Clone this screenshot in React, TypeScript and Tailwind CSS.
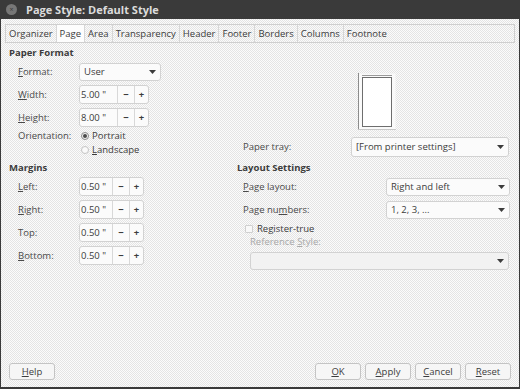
import React from "react";

const font = { fontFamily: '"Open Sans", "DejaVu Sans", sans-serif' };

function U({ children }: { children: string }) {
  return <span className="underline underline-offset-[1px]">{children}</span>;
}

function Arrow() {
  return (
    <svg width="7" height="4" viewBox="0 0 7 4" className="shrink-0">
      <path d="M0 0 L7 0 L3.5 4 Z" fill="#3c3c3c" />
    </svg>
  );
}

function Dropdown({
  value,
  className,
  disabled,
}: {
  value: string;
  className: string;
  disabled?: boolean;
}) {
  return (
    <div
      className={`flex items-center justify-between rounded-[3px] border border-[#d2d2d2] pl-[4px] pr-[4px] ${
        disabled ? "bg-[#f2f2f2]" : "bg-[#fbfbfb]"
      } ${className}`}
    >
      <span className="text-[#3c3c3c]">{value}</span>
      <Arrow />
    </div>
  );
}

function Spin({ value, valueW }: { value: string; valueW: string }) {
  return (
    <div className="flex h-full items-stretch rounded-[3px] border border-[#d2d2d2] bg-[#fbfbfb]">
      <span className={`flex items-center pl-[1px] text-[#3c3c3c] ${valueW}`}>{value}</span>
      <span className="flex w-[17px] items-center justify-center border-l border-[#d8d8d8] font-bold text-[#3c3c3c]">
        −
      </span>
      <span className="flex w-[14px] items-center justify-center border-l border-[#d8d8d8] font-bold text-[#3c3c3c]">
        +
      </span>
    </div>
  );
}

function Button({ children }: { children: React.ReactNode }) {
  return (
    <div className="flex h-[17px] w-[46px] items-center justify-center rounded-[3px] border border-[#c4c4c4] bg-[#f6f6f6] text-[#3c3c3c]">
      <span>{children}</span>
    </div>
  );
}

const tabs = ["Organizer", "Page", "Area", "Transparency", "Header", "Footer", "Borders", "Columns", "Footnote"];

export default function App() {
  return (
    <div
      className="flex h-[389px] w-[520px] flex-col overflow-hidden text-[9.5px] leading-none"
      style={font}
    >
      {/* title bar */}
      <div className="flex h-[19px] shrink-0 items-center bg-[#3a3a3a] pl-[6px]">
        <div className="flex h-[11px] w-[11px] items-center justify-center rounded-full bg-[#777777] text-[7px] text-[#3a3a3a]">
          ×
        </div>
        <span className="ml-[9px] text-[11px] font-bold text-[#dcdcdc]">Page Style: Default Style</span>
      </div>

      <div className="flex flex-1 flex-col border-x border-b-2 border-[#3a3a3a] bg-[repeating-conic-gradient(#fbfbfb_0_25%,#e4e4e4_0_50%)] bg-[length:2px_2px]">
        {/* tabs */}
        <div className="mx-[4px] mt-[5px] flex h-[19px] items-stretch border border-[#cfcfcf]">
          {tabs.map((t) => (
            <div
              key={t}
              className={`flex items-center border-r border-[#d6d6d6] px-[3px] text-[#3c3c3c] ${
                t === "Page" ? "bg-[#fdfdfd]" : ""
              } ${t === "Footnote" ? "border-r-0" : ""}`}
            >
              {t}
            </div>
          ))}
        </div>

        {/* top section */}
        <div className="mt-[3px] flex">
          <div className="w-[228px] pl-[8px]">
            <div className="flex h-[14px] items-center font-bold text-[#3c3c3c]">Paper Format</div>
            <div className="mt-[3px] flex h-[18px] items-center">
              <span className="w-[70px] pl-[9px] text-[#4a4a4a]">
                <U>F</U>ormat:
              </span>
              <Dropdown value="User" className="h-full w-[82px]" />
            </div>
            <div className="mt-[4px] flex h-[19px] items-center">
              <span className="w-[70px] pl-[9px] text-[#4a4a4a]">
                <U>W</U>idth:
              </span>
              <Spin value='5.00 "' valueW="w-[37px]" />
            </div>
            <div className="mt-[4px] flex h-[19px] items-center">
              <span className="w-[70px] pl-[9px] text-[#4a4a4a]">
                <U>H</U>eight:
              </span>
              <Spin value='8.00 "' valueW="w-[37px]" />
            </div>
            <div className="mt-[1px] flex h-[15px] items-center">
              <span className="w-[72px] pl-[9px] text-[#4a4a4a]">Orientation:</span>
              <span className="flex h-[8px] w-[8px] items-center justify-center rounded-full border border-[#8a8a8a] bg-[#f4f4f4]">
                <span className="h-[4px] w-[4px] rounded-full bg-[#4a4a4a]" />
              </span>
              <span className="ml-[3px] text-[#3c3c3c]">Portrait</span>
            </div>
            <div className="flex h-[14px] items-center">
              <span className="w-[72px]" />
              <span className="h-[8px] w-[8px] rounded-full border border-[#c4c4c4] bg-[#fafafa]" />
              <span className="ml-[3px] text-[#3c3c3c]">
                <U>L</U>andscape
              </span>
            </div>
          </div>

          <div className="flex flex-1 flex-col">
            <div className="ml-[129px] mt-[27px]">
              <svg width="38" height="57" viewBox="0 0 38 57">
                <rect x="0.5" y="0.5" width="37" height="56" fill="#fafafa" stroke="none" />
                <line x1="0.5" y1="0" x2="0.5" y2="57" stroke="#8c8c8c" />
                <line x1="0" y1="56.5" x2="38" y2="56.5" stroke="#c8c8c8" />
                <line x1="4" y1="2.5" x2="34" y2="2.5" stroke="#9a9a9a" />
                <rect x="4.5" y="4.5" width="29" height="49" fill="#ffffff" stroke="#6e6e6e" />
              </svg>
            </div>
            <div className="mt-[7px] flex h-[20px] items-center">
              <span className="w-[122px] pl-[14px] text-[#4a4a4a]">Paper tray:</span>
              <Dropdown value="[From printer settings]" className="h-full w-[158px]" />
            </div>
          </div>
        </div>

        {/* bottom section */}
        <div className="mt-[4px] flex">
          <div className="w-[228px] pl-[8px]">
            <div className="flex h-[14px] items-center font-bold text-[#3c3c3c]">Margins</div>
            {[
              ["L", "eft:"],
              ["R", "ight:"],
              ["", "Top:"],
              ["B", "ottom:"],
            ].map(([u, rest], i) => (
              <div key={rest} className={`flex h-[19px] items-center ${i === 0 ? "mt-[2px]" : "mt-[4px]"}`}>
                <span className="w-[70px] pl-[9px] text-[#4a4a4a]">
                  {u && <U>{u}</U>}
                  {rest}
                </span>
                <Spin value='0.50 "' valueW="w-[32px]" />
              </div>
            ))}
          </div>

          <div className="flex flex-1 flex-col pl-[8px]">
            <div className="flex h-[14px] items-center font-bold text-[#3c3c3c]">Layout Settings</div>
            <div className="mt-[3px] flex h-[18px] items-center">
              <span className="w-[149px] pl-[6px] text-[#4a4a4a]">
                <U>P</U>age layout:
              </span>
              <Dropdown value="Right and left" className="h-full w-[124px]" />
            </div>
            <div className="mt-[5px] flex h-[18px] items-center">
              <span className="w-[149px] pl-[6px] text-[#4a4a4a]">
                Page nu<U>m</U>bers:
              </span>
              <Dropdown value="1, 2, 3, ..." className="h-full w-[124px]" />
            </div>
            <div className="mt-[3px] flex h-[13px] items-center pl-[8px]">
              <span className="h-[8px] w-[8px] rounded-[1px] border border-[#cfcfcf] bg-[#f8f8f8]" />
              <span className="ml-[4px] text-[#3c3c3c]">Register-true</span>
            </div>
            <div className="flex h-[14px] items-center pl-[13px] text-[#a8a8a8]">
              <span>
                Reference <U>S</U>tyle:
              </span>
            </div>
            <div className="mt-[3px] pl-[13px]">
              <Dropdown value="" className="h-[18px] w-[259px]" disabled />
            </div>
          </div>
        </div>

        {/* buttons */}
        <div className="mt-auto mb-[7px] flex items-center px-[8px]">
          <Button>
            <U>H</U>elp
          </Button>
          <div className="ml-auto flex gap-[4px]">
            <Button>
              <U>O</U>K
            </Button>
            <Button>
              <U>A</U>pply
            </Button>
            <Button>
              <U>C</U>ancel
            </Button>
            <Button>
              <U>R</U>eset
            </Button>
          </div>
        </div>
      </div>
    </div>
  );
}
